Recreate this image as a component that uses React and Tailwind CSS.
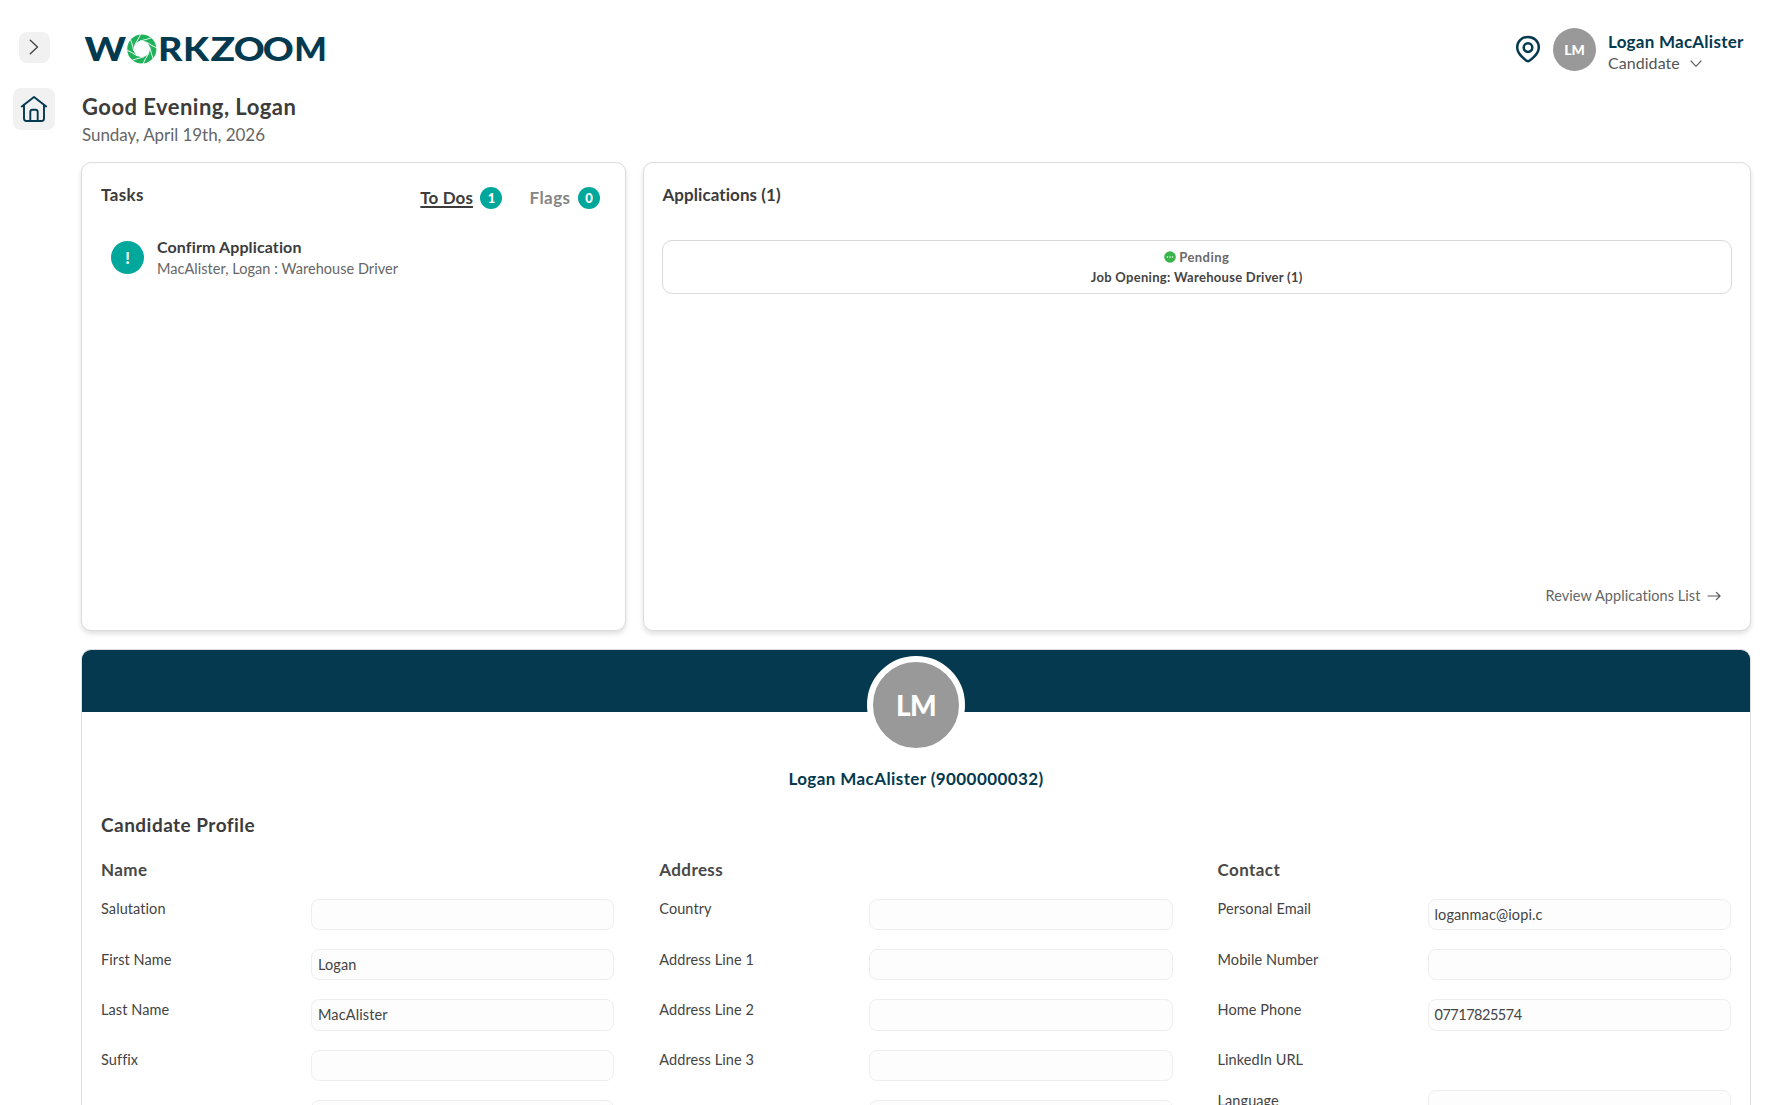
const letters = [
  { ch: 'W', x: 84.4, w: 41.6 },
  { ch: 'R', x: 158, w: 24.5 },
  { ch: 'K', x: 183, w: 26 },
  { ch: 'Z', x: 210.4, w: 24.6 },
  { ch: 'O', x: 233.8, w: 31 },
  { ch: 'O', x: 262.8, w: 31 },
  { ch: 'M', x: 294.2, w: 32.6 },
];

function Logo() {
  return (
    <svg width="248" height="50" viewBox="83 24 248 50" role="img" aria-label="Workzoom">
      {letters.map((l, i) => (
        <text
          key={i}
          x={l.x}
          y="61"
          fontFamily="Lato, sans-serif"
          fontWeight="900"
          fontSize="33"
          fill="#043a50"
          textLength={l.w}
          lengthAdjust="spacingAndGlyphs"
        >
          {l.ch}
        </text>
      ))}
      <g transform="translate(141.8 49)">
        <circle r="11.4" fill="none" stroke="#1fb25a" strokeWidth="6.4" />
        {[0, 45, 90, 135, 180, 225, 270, 315].map((a) => (
          <path
            key={a}
            d="M-2 -8 Q5 -9.4 11 -11.8"
            transform={`rotate(${a})`}
            fill="none"
            stroke="#fff"
            strokeWidth="0.9"
          />
        ))}
      </g>
    </svg>
  );
}

function Sidebar() {
  return (
    <aside className="flex w-[81px] shrink-0 flex-col items-start">
      <button className="mt-[31.5px] ml-[18.5px] flex h-[31px] w-[31px] items-center justify-center rounded-lg bg-[#f1f1f1]">
        <svg width="10" height="16" viewBox="0 0 10 16" fill="none" stroke="#4a4a4a" strokeWidth="1.5" strokeLinecap="round" strokeLinejoin="round">
          <path d="M1.3 1.2 L8.5 8 L1.3 14.8" />
        </svg>
      </button>
      <button className="mt-[25px] ml-[12.5px] flex h-[42.5px] w-[42.5px] items-center justify-center rounded-lg bg-[#f1f1f1]">
        <svg width="28" height="28" viewBox="0 0 28 28" fill="none" stroke="#04394f" strokeWidth="1.9" strokeLinecap="round" strokeLinejoin="round">
          <path d="M1.8 11.5 L14 2 L26.2 11.5" />
          <path d="M4 10.2 V23.5 Q4 26 6.5 26 H21.5 Q24 26 24 23.5 V10.2" />
          <path d="M10.3 26 V17 Q10.3 14.8 12.5 14.8 H15.5 Q17.7 14.8 17.7 17 V26" />
        </svg>
      </button>
    </aside>
  );
}

function Header() {
  return (
    <header className="flex h-[93px] shrink-0 items-start justify-between">
      <div className="mt-[24px] ml-[2px]">
        <Logo />
      </div>
      <div className="mt-7 flex items-start">
        <svg className="mt-[7px]" width="26" height="29" viewBox="0 0 26 29" fill="none" stroke="#04394f" strokeWidth="2.5" strokeLinejoin="round">
          <path d="M13 26.2 C11.4 26.2 9.8 24.6 7.6 22.4 C4.4 19.3 2.2 16.5 2.2 12.4 C2.2 6.3 7 1.9 13 1.9 C19 1.9 23.8 6.3 23.8 12.4 C23.8 16.5 21.6 19.3 18.4 22.4 C16.2 24.6 14.6 26.2 13 26.2 Z" />
          <circle cx="13" cy="12.6" r="4.3" />
        </svg>
        <div className="ml-[12.5px] flex h-[43px] w-[43px] items-center justify-center rounded-full bg-[#999999] text-sm font-black text-white">
          LM
        </div>
        <div className="ml-[12px] w-[143px]">
          <div className="mt-[2px] text-[17px] leading-6 font-bold tracking-[0.25px] whitespace-nowrap text-[#04394f]">
            Logan MacAlister
          </div>
          <div className="-mt-[2px] flex items-center text-base leading-[22px] tracking-[0.05px] text-[#555555]">
            Candidate
            <svg className="mt-[2px] ml-[10px]" width="12" height="8" viewBox="0 0 12 8" fill="none" stroke="#666" strokeWidth="1.2" strokeLinecap="round" strokeLinejoin="round">
              <path d="M1 1 L6 6.4 L11 1" />
            </svg>
          </div>
        </div>
      </div>
    </header>
  );
}

function Badge({ children }) {
  return (
    <span className="ml-[7.5px] flex h-[22px] w-[22px] items-center justify-center rounded-full bg-[#00a79b] text-[13px] leading-none font-black text-white">
      {children}
    </span>
  );
}

function TasksCard() {
  return (
    <section className="w-[545px] shrink-0 rounded-[10px] border border-[#dcdcdc] bg-white pt-[20px] pr-[25px] pl-[19px] shadow-[0_3px_5px_rgba(0,0,0,0.12)]">
      <div className="flex items-start justify-between">
        <h2 className="text-[17px] leading-6 font-bold tracking-[0.4px] text-[#3c3c3c]">Tasks</h2>
        <div className="mt-[3px] flex items-center text-[17px] leading-6 font-bold">
          <span className="tracking-[0.08px] text-[#3c3c3c] underline decoration-[1.5px] underline-offset-2">To Dos</span>
          <Badge>1</Badge>
          <span className="ml-[27px] tracking-[0.45px] text-[#858585]">Flags</span>
          <Badge>0</Badge>
        </div>
      </div>
      <div className="mt-[26px] ml-[10px] flex items-start">
        <span className="mt-[5px] flex h-[33px] w-[33px] items-center justify-center rounded-full bg-[#00a79b] text-base leading-none font-black text-white">
          !
        </span>
        <div className="ml-[13px]">
          <div className="text-base leading-[22px] font-bold tracking-[0.12px] text-[#3c3c3c]">Confirm Application</div>
          <div className="mt-px text-[14.5px] leading-5 tracking-[0.04px] text-[#666666]">
            MacAlister, Logan : Warehouse Driver
          </div>
        </div>
      </div>
    </section>
  );
}

function ApplicationsCard() {
  return (
    <section className="flex flex-1 flex-col rounded-[10px] border border-[#dcdcdc] bg-white pt-[20px] pr-[18px] pb-[24px] pl-[17.5px] shadow-[0_3px_5px_rgba(0,0,0,0.12)]">
      <h2 className="ml-px text-[17px] leading-6 font-bold tracking-[0.07px] text-[#3c3c3c]">Applications (1)</h2>
      <div className="mt-[32.5px] flex h-[54px] flex-col items-center rounded-[10px] border border-[#d9d9d9] pt-[7.5px] text-[13px] font-bold">
        <div className="flex items-center leading-[18px] tracking-[0.45px] text-[#6a6a6a]">
          <svg className="mr-[3px]" width="12" height="12" viewBox="0 0 12 12">
            <circle cx="6" cy="6" r="5.8" fill="#39b54a" />
            <circle cx="3.4" cy="6" r="0.8" fill="#fff" />
            <circle cx="6" cy="6" r="0.8" fill="#fff" />
            <circle cx="8.6" cy="6" r="0.8" fill="#fff" />
          </svg>
          Pending
        </div>
        <div className="mt-[2px] leading-[18px] tracking-[0.29px] text-[#444444]">Job Opening: Warehouse Driver (1)</div>
      </div>
      <a className="mt-auto mr-[11px] flex items-center self-end text-[14.5px] leading-5 tracking-[0.07px] text-[#666666]">
        Review Applications List
        <svg className="ml-[6.5px]" width="14" height="10" viewBox="0 0 14 10" fill="none" stroke="#555" strokeWidth="1.2" strokeLinecap="round" strokeLinejoin="round">
          <path d="M1 5 H13 M9.4 1.4 L13 5 L9.4 8.6" />
        </svg>
      </a>
    </section>
  );
}

function Field({ label, value, hidden, short }) {
  return (
    <div className={short ? 'flex h-[40.3px] items-start' : 'flex h-[50.4px] items-start'}>
      <label className="mt-[0.8px] w-[210px] shrink-0 text-[14.5px] leading-5 tracking-[0.08px] text-[#444444]">{label}</label>
      {!hidden && (
        <div className="h-[31.5px] flex-1 rounded-lg border border-[#eeeeee] bg-[#fdfdfd] px-[6px] text-[14.5px] leading-[29.5px] text-[#444444]">
          {value === '07717825574' ? <span className="tracking-[-0.5px]">{value}</span> : <span className="tracking-[0.12px]">{value}</span>}
        </div>
      )}
    </div>
  );
}

const columns = [
  {
    title: 'Name',
    fields: [
      { label: 'Salutation' },
      { label: 'First Name', value: 'Logan' },
      { label: 'Last Name', value: 'MacAlister' },
      { label: 'Suffix' },
      { label: '' },
    ],
  },
  {
    title: 'Address',
    fields: [
      { label: 'Country' },
      { label: 'Address Line 1' },
      { label: 'Address Line 2' },
      { label: 'Address Line 3' },
      { label: 'Town/City' },
    ],
  },
  {
    title: 'Contact',
    fields: [
      { label: 'Personal Email', value: 'loganmac@iopi.c' },
      { label: 'Mobile Number' },
      { label: 'Home Phone', value: '07717825574' },
      { label: 'LinkedIn URL', hidden: true, short: true },
      { label: 'Language' },
    ],
  },
];

function Profile() {
  return (
    <section className="mt-[18px] h-[600px] shrink-0 rounded-[10px] border border-[#dcdcdc] bg-white">
      <div className="flex h-[61.5px] justify-center rounded-t-[9px] bg-[#04394f] pt-[6px]">
        <div className="flex h-[98px] w-[98px] shrink-0 items-center justify-center rounded-full border-[6px] border-white bg-[#999999] pb-px text-[28px] font-black tracking-[-0.6px] text-white">
          LM
        </div>
      </div>
      <div className="mt-[55.5px] text-center text-[17px] leading-6 font-bold tracking-[0.41px] text-[#04394f]">
        Logan MacAlister (9000000032)
      </div>
      <div className="px-[19px]">
        <h2 className="mt-5 text-[19px] leading-7 font-bold tracking-[0.47px] text-[#3c3c3c]">Candidate Profile</h2>
        <div className="mt-[19px] grid grid-cols-3 gap-[44.8px]">
          {columns.map((c) => (
            <div key={c.title}>
              <h3 className="mb-[16.5px] text-[17px] leading-6 font-bold tracking-[0.4px] text-[#484848]">{c.title}</h3>
              {c.fields.map((f) => (
                <Field key={f.label} {...f} />
              ))}
            </div>
          ))}
        </div>
      </div>
    </section>
  );
}

export default function App() {
  return (
    <div className="flex h-[1105px] overflow-hidden bg-white font-['Lato',sans-serif]">
      <Sidebar />
      <main className="mr-[17px] flex min-w-0 flex-1 flex-col">
        <Header />
        <h1 className="ml-px text-[22px] leading-7 font-bold tracking-[0.47px] text-[#3c3c3c]">Good Evening, Logan</h1>
        <p className="mt-[2px] ml-px text-[17px] leading-6 tracking-[-0.05px] text-[#666666]">Sunday, April 19th, 2026</p>
        <div className="mt-[15px] flex h-[469px] shrink-0 gap-[17px]">
          <TasksCard />
          <ApplicationsCard />
        </div>
        <Profile />
      </main>
    </div>
  );
}
